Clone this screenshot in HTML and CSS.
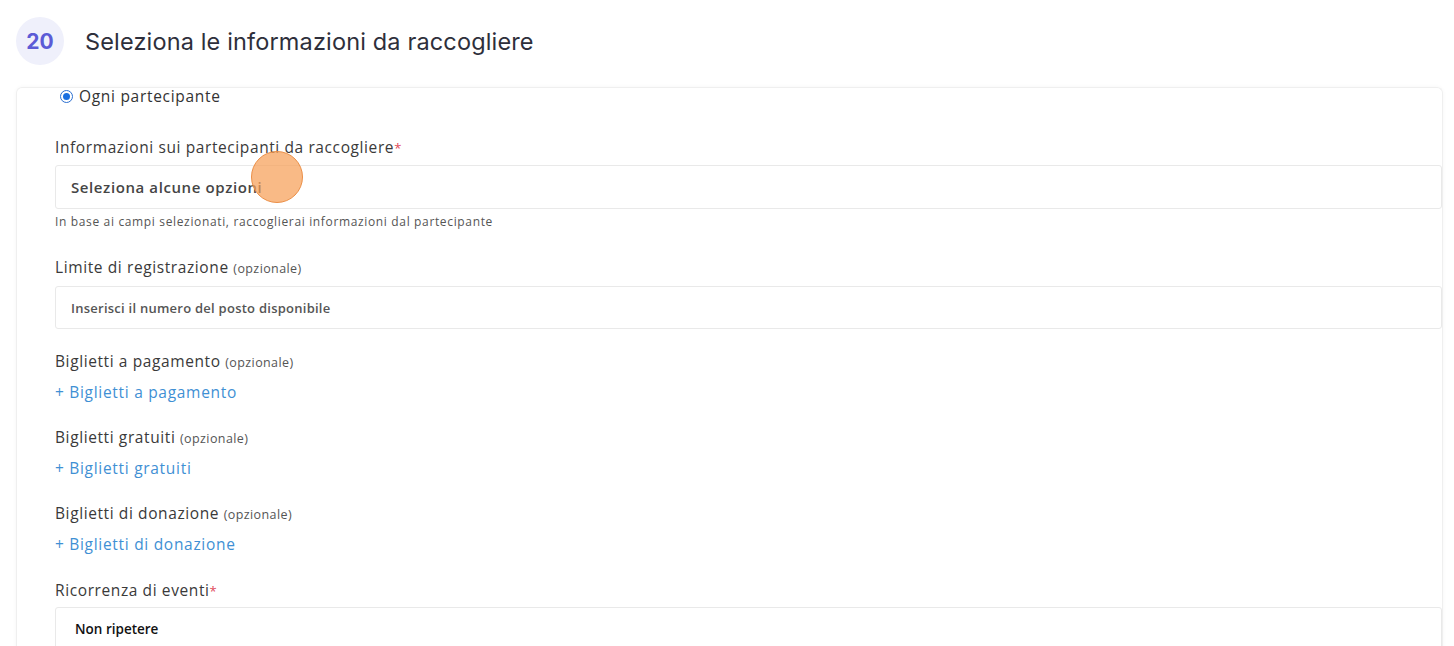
FILE: index.html
```html
<!DOCTYPE html>
<html lang="it">
<head>
<meta charset="UTF-8">
<meta name="viewport" content="width=device-width, initial-scale=1.0">
<title>Seleziona le informazioni da raccogliere</title>
<link rel="stylesheet" href="styles.css">
</head>
<body>
<div class="step">
  <div class="step-num">20</div>
  <h2 class="step-title">Seleziona le informazioni da raccogliere</h2>
</div>

<div class="card">
  <label class="radio-row">
    <span class="radio"><span class="radio-dot"></span></span>
    Ogni partecipante
  </label>

  <div class="field field-info">
    <div class="label">Informazioni sui partecipanti da raccogliere<span class="req">*</span></div>
    <div class="input select-input">Seleziona alcune opzioni</div>
    <div class="hint">In base ai campi selezionati, raccoglierai informazioni dal partecipante</div>
    <span class="click-mark"></span>
  </div>

  <div class="field field-limit">
    <div class="label">Limite di registrazione <small>(opzionale)</small></div>
    <div class="input placeholder">Inserisci il numero del posto disponibile</div>
  </div>

  <div class="field tickets first-ticket">
    <div class="label">Biglietti a pagamento <small>(opzionale)</small></div>
    <a class="add-link" href="#">+ Biglietti a pagamento</a>
  </div>

  <div class="field tickets">
    <div class="label">Biglietti gratuiti <small>(opzionale)</small></div>
    <a class="add-link" href="#">+ Biglietti gratuiti</a>
  </div>

  <div class="field tickets">
    <div class="label">Biglietti di donazione <small>(opzionale)</small></div>
    <a class="add-link" href="#">+ Biglietti di donazione</a>
  </div>

  <div class="field field-repeat">
    <div class="label">Ricorrenza di eventi<span class="req">*</span></div>
    <div class="input value">Non ripetere</div>
  </div>
</div>
</body>
</html>
```

FILE: styles.css
```css
* {
  box-sizing: border-box;
}
body {
  margin: 0;
  padding: 0;
  background-color: #fff;
  font-family: "Open Sans", "Noto Sans", sans-serif;
  color: #333;
  overflow: hidden;
}
.step {
  display: flex;
  align-items: center;
  gap: 21px;
  padding: 17px 0 0 16px;
}
.step-num {
  width: 48px;
  height: 48px;
  border-radius: 50%;
  background-color: #eff0fb;
  color: #5b5bd6;
  font-family: "Inter", sans-serif;
  font-weight: 700;
  font-size: 21px;
  display: flex;
  align-items: center;
  justify-content: center;
}
.step-title {
  margin: 0;
  font-family: "Inter", sans-serif;
  font-weight: 400;
  font-size: 23.5px;
  color: #2e2f3b;
  letter-spacing: 0.15px;
}
.card {
  margin: 22px 11px 0 16px;
  padding: 0 0 20px 38px;
  border: 1px solid #efefef;
  border-bottom: none;
  border-radius: 6px 6px 0 0;
  box-shadow: 0 0 4px rgba(0, 0, 0, 0.04);
}
.radio-row {
  display: flex;
  align-items: center;
  gap: 6px;
  margin-left: 5px;
  font-size: 15.5px;
  line-height: 16px;
  letter-spacing: 0.7px;
  color: #333;
}
.radio {
  width: 13px;
  height: 13px;
  border-radius: 50%;
  border: 1px solid #2b6fd0;
  display: flex;
  align-items: center;
  justify-content: center;
}
.radio-dot {
  width: 7px;
  height: 7px;
  border-radius: 50%;
  background-color: #1a6fe0;
}
.field {
  position: relative;
}
.label {
  height: 22px;
  font-size: 15.5px;
  line-height: 22px;
  letter-spacing: 0.6px;
  color: #3a3a3a;
}
.label small {
  font-size: 12.5px;
  line-height: 1;
  letter-spacing: 0.4px;
  color: #555;
}
.req {
  color: #e04a5a;
  font-size: 13px;
  line-height: 1;
}
.field-info {
  margin-top: 32px;
}
.field-limit {
  margin-top: 25px;
}
.first-ticket {
  margin-top: 21px;
}
.tickets + .tickets {
  margin-top: 23px;
}
.field-repeat {
  margin-top: 24px;
}
.input {
  margin-top: 7px;
  height: 44px;
  border: 1px solid #e9e9e9;
  border-radius: 3px;
  display: flex;
  align-items: center;
  padding-left: 15px;
  font-size: 13px;
  letter-spacing: 0.25px;
  color: #555;
  font-weight: 600;
}
.field-limit .input {
  margin-top: 8px;
  height: 43px;
}
.field-repeat .input {
  margin-top: 6px;
}
.select-input {
  font-size: 15px;
  letter-spacing: 0.6px;
  font-weight: 600;
  color: #454545;
}
.value {
  font-size: 13.5px;
  letter-spacing: 0;
  color: #111;
  padding-left: 19px;
}
.hint {
  height: 18px;
  font-size: 12px;
  line-height: 18px;
  letter-spacing: 0.65px;
  color: #555;
  margin-top: 4px;
}
.add-link {
  display: block;
  height: 22px;
  margin-top: 9px;
  font-size: 15.5px;
  line-height: 22px;
  letter-spacing: 0.7px;
  color: #3f90d4;
  text-decoration: none;
}
.tickets:last-of-type .add-link {
  margin-top: 8px;
}
.click-mark {
  position: absolute;
  left: 196px;
  top: 15px;
  width: 52px;
  height: 52px;
  border-radius: 50%;
  background-color: rgba(246, 160, 88, 0.72);
  border: 1px solid #eb8f47;
}
```
